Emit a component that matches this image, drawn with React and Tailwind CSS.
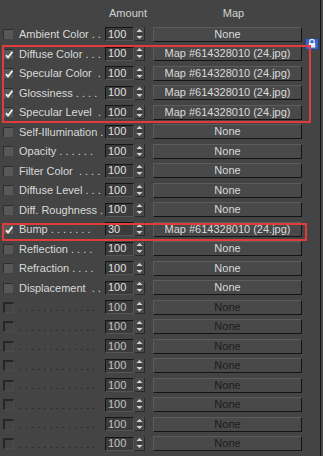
import React from "react";

const rows = [
  { label: "Ambient Color . .", on: true, checked: false, amount: "100", map: "None" },
  { label: "Diffuse Color . . .", on: true, checked: true, amount: "100", map: "Map #614328010 (24.jpg)" },
  { label: "Specular Color  .", on: true, checked: true, amount: "100", map: "Map #614328010 (24.jpg)" },
  { label: "Glossiness . . . .", on: true, checked: true, amount: "100", map: "Map #614328010 (24.jpg)" },
  { label: "Specular Level  .", on: true, checked: true, amount: "100", map: "Map #614328010 (24.jpg)" },
  { label: "Self-Illumination .", on: true, checked: false, amount: "100", map: "None" },
  { label: "Opacity . . . . . .", on: true, checked: false, amount: "100", map: "None" },
  { label: "Filter Color  . . . .", on: true, checked: false, amount: "100", map: "None" },
  { label: "Diffuse Level . . .", on: true, checked: false, amount: "100", map: "None" },
  { label: "Diff. Roughness .", on: true, checked: false, amount: "100", map: "None" },
  { label: "Bump . . . . . . .", on: true, checked: true, amount: "30", map: "Map #614328010 (24.jpg)" },
  { label: "Reflection . . . .", on: true, checked: false, amount: "100", map: "None" },
  { label: "Refraction . . . .", on: true, checked: false, amount: "100", map: "None" },
  { label: "Displacement  . .", on: true, checked: false, amount: "100", map: "None" },
];

for (let i = 0; i < 9; i++) {
  rows.push({ label: ". . . . . . . . . . . . .", on: false, checked: false, amount: "100", map: "None" });
}

const Check = () => (
  <svg width="10" height="10" viewBox="0 0 10 10" className="block">
    <path d="M2 5.2 L4 7.6 L8.4 1.8" fill="none" stroke="#f2f2f2" strokeWidth="1.8" />
  </svg>
);

const Spinner = () => (
  <svg width="9" height="14" viewBox="0 0 9 14" className="block">
    <path d="M4.5 2 L7.5 5 L1.5 5 Z" fill="#d4d4d4" />
    <path d="M2 7 L7 7" stroke="#2a2a2a" strokeWidth="1" />
    <path d="M4.5 12 L7.5 9 L1.5 9 Z" fill="#d4d4d4" />
  </svg>
);

const Row = ({ row }) => (
  <div className="flex h-[19.5px] items-center">
    {/* checkbox */}
    <div className="w-[19px] pl-[3px]">
      {row.on ? (
        <div className="h-[10px] w-[10px] border-t border-l border-[#2e2e2e] bg-[#585858]">
          {row.checked && <Check />}
        </div>
      ) : (
        <div className="h-[11px] w-[11px] border-t-2 border-l-2 border-[#262626] border-r border-b border-r-[#4c4c4c] border-b-[#4c4c4c]" />
      )}
    </div>

    {/* label */}
    <div
      className={
        "w-[86px] overflow-hidden whitespace-pre text-[11px] leading-[14px] " +
        (row.on ? "text-[#dadada]" : "text-[#1f1f1f]")
      }
    >
      {row.label}
    </div>

    {/* amount */}
    <div className="flex h-[14px] w-[29px] items-center border-t border-l border-[#151515] border-r border-b border-r-[#555] border-b-[#555] bg-[#3b3b3b] pl-[2px] text-[11px] leading-none">
      <span className={row.on ? "text-[#e0e0e0]" : "text-[#c4c4c4]"}>{row.amount}</span>
    </div>
    <div className="ml-[1px] flex h-[14px] w-[10px] items-center justify-center bg-[#4a4a4a] border-r border-b border-[#2a2a2a]">
      <Spinner />
    </div>

    {/* map button */}
    <div
      className={
        "ml-[8px] flex h-[15px] w-[149px] items-center justify-center border-t border-l border-[#5c5c5c] border-r border-b border-r-[#141414] border-b-[#141414] bg-[#494949] text-[11px] leading-none " +
        (row.on ? "text-[#dadada]" : "text-[#1c1c1c]")
      }
    >
      {row.map}
    </div>
  </div>
);

export default function App() {
  return (
    <div
      className="relative h-[456px] w-[323px] overflow-hidden bg-[#444444]"
      style={{ fontFamily: '"Liberation Sans", Arial, sans-serif' }}
    >
      <div className="flex h-full">
        <div className="w-[320px]">
          {/* header */}
          <div className="flex h-[24.5px] items-center pt-[2px] text-[11px] text-[#d2d2d2]">
            <div className="w-[105px]" />
            <div className="w-[46px] text-center">Amount</div>
            <div className="w-[165px] text-center">Map</div>
          </div>
          {rows.map((row, i) => (
            <Row key={i} row={row} />
          ))}
        </div>
        <div className="w-[1px] bg-[#161616]" />
        <div className="flex-1 bg-[#4a4a4a]" />
      </div>

      {/* small blue panel pin */}
      <div className="absolute left-[305px] top-[38px]">
        <svg width="14" height="12" viewBox="0 0 14 12" className="block">
          <rect x="0.5" y="0.5" width="13" height="11" rx="1.5" fill="#3f63c4" stroke="#27407e" />
          <path d="M4.8 5 V3.6 a2.2 2.2 0 0 1 4.4 0 V5" fill="none" stroke="#e8ecf6" strokeWidth="1.2" />
          <rect x="3.8" y="5" width="6.4" height="4.6" fill="#e8ecf6" />
        </svg>
      </div>

      {/* red annotation boxes */}
      <div className="pointer-events-none absolute left-[2px] top-[45px] h-[78px] w-[309px] border-2 border-[#e23b3b]" />
      <div className="pointer-events-none absolute left-[1.5px] top-[222.5px] h-[18.5px] w-[305.5px] border-2 border-[#e23b3b]" />
    </div>
  );
}
